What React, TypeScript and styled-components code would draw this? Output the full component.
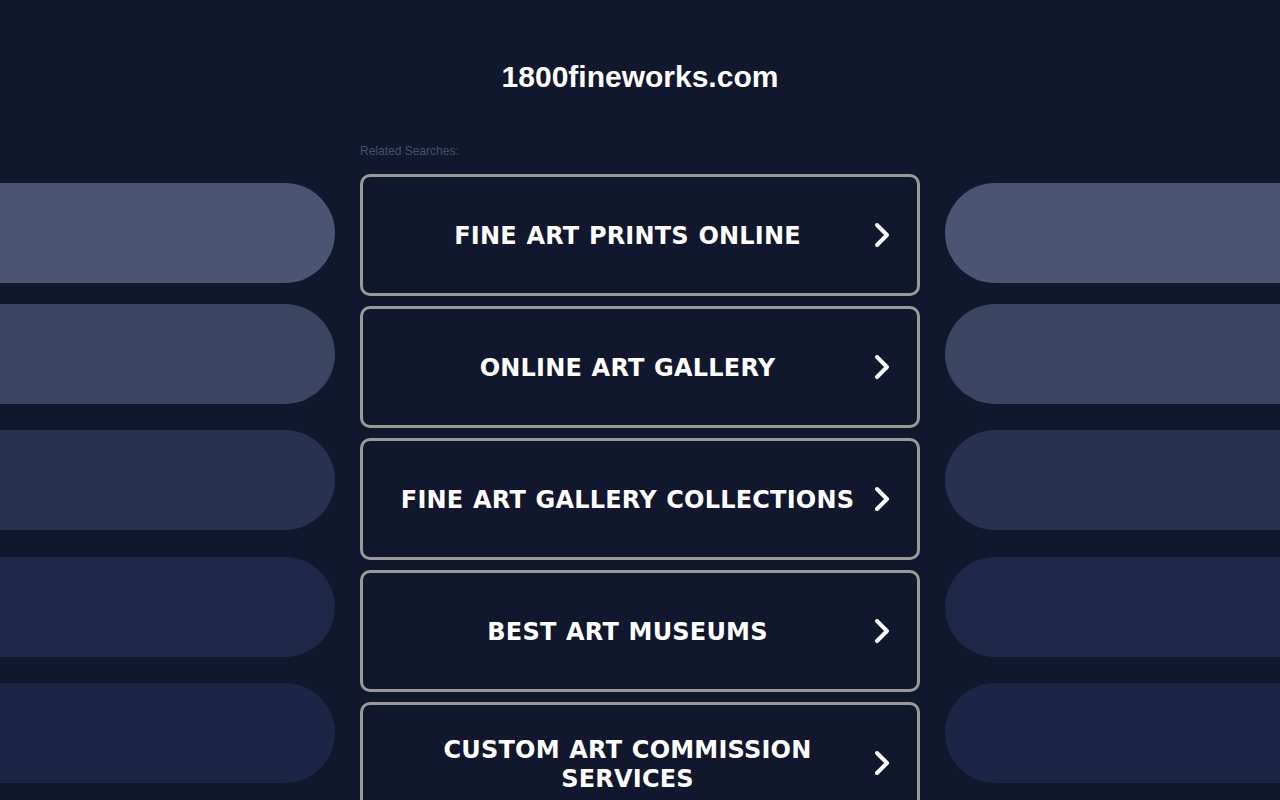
import { createGlobalStyle } from "styled-components";
import styled from "styled-components";

const GlobalStyle = createGlobalStyle`
  html, body {
    margin: 0;
    padding: 0;
    background: #11172c;
    overflow: hidden;
  }
  body {
    font-family: "Liberation Sans", Arial, sans-serif;
  }
`;

const SEARCHES = [
  "FINE ART PRINTS ONLINE",
  "ONLINE ART GALLERY",
  "FINE ART GALLERY COLLECTIONS",
  "BEST ART MUSEUMS",
  "CUSTOM ART COMMISSION SERVICES",
];

const PILLS = [
  { color: "#4b5573", gap: 0 },
  { color: "#3b4461", gap: 21 },
  { color: "#283150", gap: 26 },
  { color: "#1e2748", gap: 27 },
  { color: "#1c2545", gap: 26 },
];

const Chevron = () => (
  <svg width="20" height="28" viewBox="0 0 20 28" fill="none">
    <polyline
      points="5,4 15,14 5,24"
      stroke="#fff"
      strokeWidth="4"
      strokeLinecap="round"
      strokeLinejoin="round"
    />
  </svg>
);

const App = () => {
  return (
    <Page>
      <GlobalStyle />
      <Header>
        <Title>1800fineworks.com</Title>
      </Header>
      <Row>
        <PillColumn>
          {PILLS.map((pill, i) => (
            <Pill key={i} $color={pill.color} $gap={pill.gap} $side="left" />
          ))}
        </PillColumn>
        <Center>
          <Label>Related Searches:</Label>
          <List>
            {SEARCHES.map((item) => (
              <SearchButton key={item} href="#">
                <ButtonText>{item}</ButtonText>
                <Arrow>
                  <Chevron />
                </Arrow>
              </SearchButton>
            ))}
          </List>
        </Center>
        <PillColumn>
          {PILLS.map((pill, i) => (
            <Pill key={i} $color={pill.color} $gap={pill.gap} $side="right" />
          ))}
        </PillColumn>
      </Row>
    </Page>
  );
};

export default App;

const Page = styled.div`
  width: 1280px;
  height: 800px;
  overflow: hidden;
  background: #11172c;
`;

const Header = styled.header`
  height: 130px;
  padding-top: 60px;
  box-sizing: border-box;
  text-align: center;
`;

const Title = styled.h1`
  margin: 0;
  font-family: "Liberation Sans", Arial, sans-serif;
  font-weight: 700;
  font-size: 30px;
  line-height: 34px;
  color: #fff;
`;

const Row = styled.div`
  display: grid;
  grid-template-columns: 335px 560px 335px;
  column-gap: 25px;
`;

const PillColumn = styled.div`
  display: flex;
  flex-direction: column;
  padding-top: 53px;
`;

const Pill = styled.div<{ $color: string; $gap: number; $side: "left" | "right" }>`
  height: 100px;
  flex-shrink: 0;
  margin-top: ${({ $gap }) => $gap}px;
  background: ${({ $color }) => $color};
  border-radius: ${({ $side }) => ($side === "left" ? "0 50px 50px 0" : "50px 0 0 50px")};
`;

const Center = styled.div`
  display: flex;
  flex-direction: column;
  padding-top: 14px;
`;

const Label = styled.div`
  font-family: "Liberation Sans", Arial, sans-serif;
  font-size: 12px;
  line-height: 14px;
  color: #46506d;
  margin-bottom: 16px;
`;

const List = styled.div`
  display: flex;
  flex-direction: column;
  gap: 10px;
`;

const SearchButton = styled.a`
  display: flex;
  align-items: center;
  height: 122px;
  flex-shrink: 0;
  box-sizing: border-box;
  padding: 0 25px 0 20px;
  border: 3px solid #9a9a9a;
  border-radius: 10px;
  background: #11172c;
  text-decoration: none;
`;

const ButtonText = styled.span`
  flex: 1;
  padding-top: 3px;
  text-align: center;
  font-family: "DejaVu Sans", Verdana, sans-serif;
  font-weight: 700;
  font-size: 24px;
  line-height: 29px;
  letter-spacing: 0.2px;
  word-spacing: 1px;
  color: #fff;
`;

const Arrow = styled.span`
  display: flex;
  width: 20px;
  height: 28px;
`;
